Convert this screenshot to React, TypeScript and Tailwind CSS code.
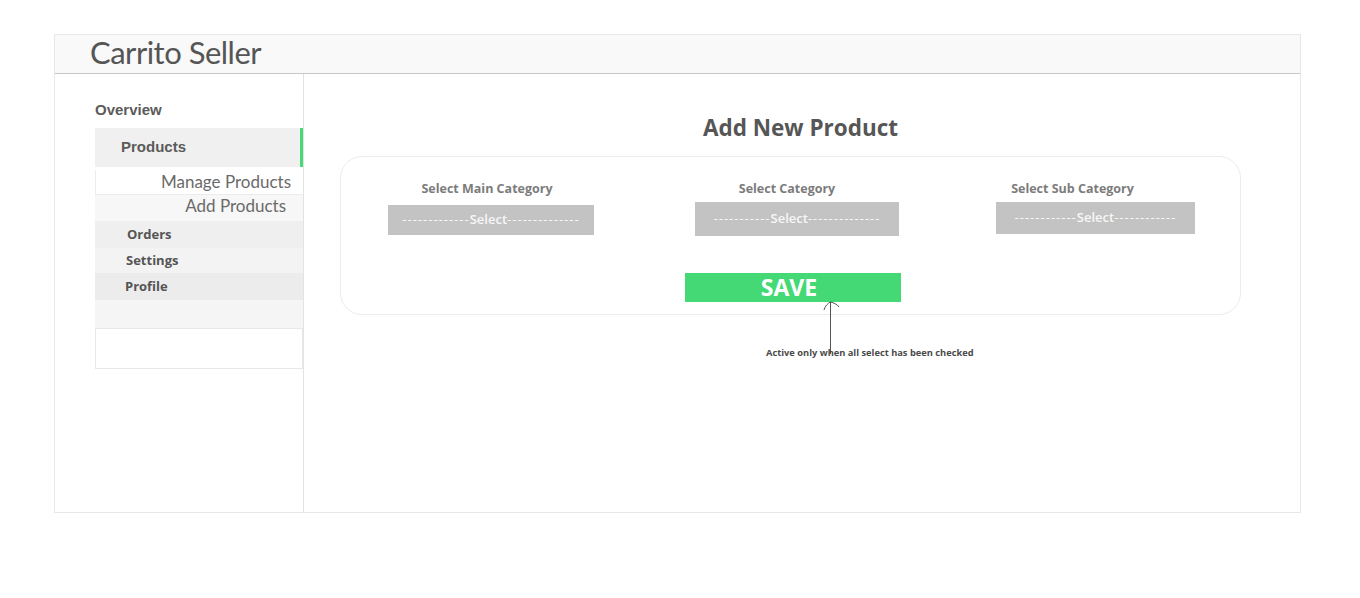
import { useState } from 'react'

const SUB_NAV = [
  { label: 'Manage Products', className: 'h-[24px] bg-white pr-[12px] border-l border-[#ececec]' },
  { label: 'Add Products', className: 'h-[27px] bg-[#f7f7f7] pr-[17px] pb-[4px] border-t border-[#ececec]' },
]

const MAIN_NAV = [
  { label: 'Orders', className: 'h-[27px] bg-[#efefef] pl-[32px]' },
  { label: 'Settings', className: 'h-[25px] bg-[#f3f3f3] pl-[31px]' },
  { label: 'Profile', className: 'h-[27px] bg-[#ececec] pl-[30px]' },
]

const SELECTS = [
  { label: 'Select Main Category', dashes: ['-------------', '--------------'], box: 'w-[206px] h-[30px] mt-[6px]', wrap: 'ml-[47px]', labelShift: '-ml-[8px]' },
  { label: 'Select Category', dashes: ['-----------', '--------------'], box: 'w-[204px] h-[34px] mt-[3px]', wrap: 'ml-[101px]', labelShift: '-ml-[20px]' },
  { label: 'Select Sub Category', dashes: ['------------', '------------'], box: 'w-[199px] h-[32px] mt-[3px]', wrap: 'ml-[97px]', labelShift: '-ml-[46px]' },
]

function Sidebar() {
  return (
    <aside className="w-[249px] shrink-0 border-r border-[#e3e3e3] pl-[40px] pt-[27px]">
      <p className="text-[15px] font-semibold text-[#5b5b5b] leading-[18px] pb-[9px]" style={{ fontFamily: '"Liberation Sans", Arial, sans-serif' }}>
        Overview
      </p>
      <div className="flex h-[39px] items-center justify-between bg-[#f0f0f0] pl-[26px] border-r-[3px] border-[#46d977]">
        <span className="text-[15px] font-bold text-[#5b5b5b]" style={{ fontFamily: '"Liberation Sans", Arial, sans-serif' }}>Products</span>
      </div>
      <div className="mt-[3px]" style={{ fontFamily: 'Lato, "Liberation Sans", sans-serif' }}>
        {SUB_NAV.map((item) => (
          <div key={item.label} className={`flex items-center justify-end text-[17px] text-[#6a6a6a] ${item.className}`}>
            {item.label}
          </div>
        ))}
      </div>
      <div style={{ fontFamily: '"Open Sans", "Liberation Sans", sans-serif' }}>
        {MAIN_NAV.map((item) => (
          <div key={item.label} className={`flex items-center text-[13px] font-bold text-[#555] ${item.className}`}>
            {item.label}
          </div>
        ))}
        <div className="h-[28px] bg-[#f5f5f5]" />
        <div className="h-[41px] border border-[#e8e8e8] bg-white" />
      </div>
    </aside>
  )
}

function CategorySelect({ label, dashes, box, wrap, labelShift }: (typeof SELECTS)[number]) {
  return (
    <div className={`flex flex-col items-center ${wrap}`}>
      <p className={`whitespace-nowrap text-[12.5px] font-bold text-[#7c7c7c] ${labelShift}`}>{label}</p>
      <div className={`flex items-center justify-center bg-[#c3c3c3] text-[13px] text-[#f7f7f7] ${box}`}>
        <span className="tracking-[1px]">{dashes[0]}</span>
        <span className="font-semibold">Select</span>
        <span className="tracking-[1px]">{dashes[1]}</span>
      </div>
    </div>
  )
}

export default function App() {
  const [ready] = useState(false)

  return (
    <div className="min-h-[598px] bg-white pl-[54px] pt-[34px]" style={{ fontFamily: '"Open Sans", "Liberation Sans", sans-serif' }}>
      <div className="flex h-[479px] w-[1247px] flex-col border border-[#e8e8e8]">
        <header className="flex h-[39px] shrink-0 items-center border-b border-[#c8c8c8] bg-[#f9f9f9] pl-[35px] pb-[3px]">
          <h1 className="text-[31px] text-[#555] tracking-[-0.5px] leading-none" style={{ fontFamily: 'Lato, "Liberation Sans", sans-serif' }}>
            Carrito Seller
          </h1>
        </header>

        <div className="flex flex-1">
          <Sidebar />

          <main className="flex-1 pl-[36px] pr-[59px] pt-[40px]">
            <h2 className="text-center text-[22.5px] font-bold text-[#565656] leading-[28px] pl-[20px]">Add New Product</h2>

            <div className="relative mt-[14px] h-[159px] rounded-[22px] border border-[#ececec] pt-[23px]">
              <div className="flex items-start">
                {SELECTS.map((s) => (
                  <CategorySelect key={s.label} {...s} />
                ))}
              </div>

              <div className="mt-[37px] flex pl-[344px]">
                <button
                  type="button"
                  disabled={!ready}
                  className="flex h-[29px] w-[216px] items-center justify-center bg-[#44d975] pr-[8px] text-[23px] font-bold text-white"
                >
                  SAVE
                </button>
              </div>

              <svg className="absolute left-[479px] top-[142px] h-[56px] w-[26px]" viewBox="0 0 26 56" fill="none" stroke="#555" strokeWidth="1">
                <path d="M10.5 3 V 55" />
                <path d="M4 11 C 5 7, 8 4, 10.5 3 C 14 4, 17 5, 19 8" />
              </svg>

              <p className="absolute left-[425px] top-[189px] whitespace-nowrap text-[9.3px] font-bold text-[#4a4a4a]">
                Active only when all select has been checked
              </p>
            </div>
          </main>
        </div>
      </div>
    </div>
  )
}
